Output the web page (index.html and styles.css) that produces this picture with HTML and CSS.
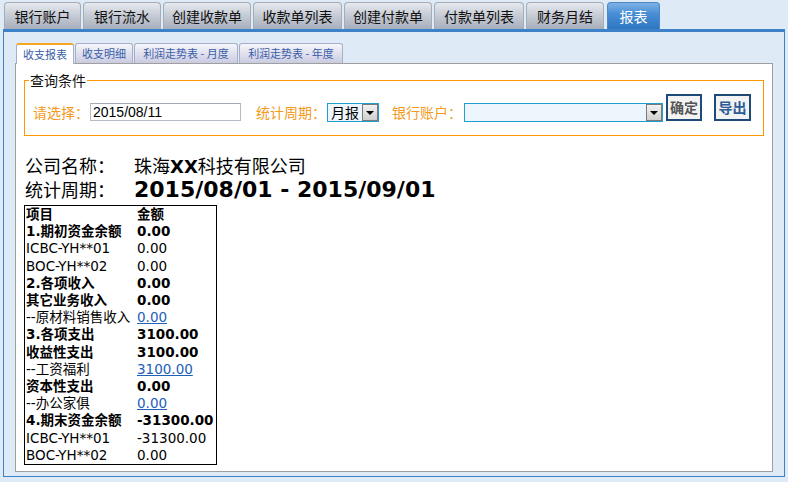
FILE: index.html
```html
<!DOCTYPE html>
<html>
<head>
<meta charset="utf-8">
<link rel="stylesheet" href="styles.css">
</head>
<body>
<div class="topnav">
  <div class="tab">银行账户</div>
  <div class="tab">银行流水</div>
  <div class="tab">创建收款单</div>
  <div class="tab">收款单列表</div>
  <div class="tab">创建付款单</div>
  <div class="tab">付款单列表</div>
  <div class="tab">财务月结</div>
  <div class="tab active">报表</div>
</div>
<div class="panel">
  <div class="subtabs">
    <div class="subtab active">收支报表</div>
    <div class="subtab">收支明细</div>
    <div class="subtab">利润走势表 - 月度</div>
    <div class="subtab">利润走势表 - 年度</div>
  </div>
  <div class="content">
    <fieldset class="query">
      <legend>查询条件</legend>
      <div class="qrow">
        <span class="lbl">请选择：</span>
        <span class="textin">2015/08/11</span>
        <span class="lbl l2">统计周期：</span>
        <span class="sel sel-period"><span class="selval">月报</span><span class="arrow"><span class="tri"></span></span></span>
        <span class="lbl l3">银行账户：</span>
        <span class="sel sel-bank"><span class="selval"></span><span class="arrow"><span class="tri"></span></span></span>
        <span class="btn btn-ok">确定</span>
        <span class="btn btn-exp">导出</span>
      </div>
    </fieldset>
    <div class="heading">
      <div class="hline"><span class="hlabel">公司名称：</span><span>珠海<b>XX</b>科技有限公司</span></div>
      <div class="hline"><span class="hlabel">统计周期：</span><b class="period">2015/08/01 - 2015/09/01</b></div>
    </div>
    <table class="report">
      <tr><td class="b">项目</td><td class="b">金额</td></tr>
      <tr><td class="b">1.期初资金余额</td><td class="b">0.00</td></tr>
      <tr><td>ICBC-YH**01</td><td>0.00</td></tr>
      <tr><td>BOC-YH**02</td><td>0.00</td></tr>
      <tr><td class="b">2.各项收入</td><td class="b">0.00</td></tr>
      <tr><td class="b">其它业务收入</td><td class="b">0.00</td></tr>
      <tr><td>--原材料销售收入</td><td><a href="#">0.00</a></td></tr>
      <tr><td class="b">3.各项支出</td><td class="b">3100.00</td></tr>
      <tr><td class="b">收益性支出</td><td class="b">3100.00</td></tr>
      <tr><td>--工资福利</td><td><a href="#">3100.00</a></td></tr>
      <tr><td class="b">资本性支出</td><td class="b">0.00</td></tr>
      <tr><td>--办公家俱</td><td><a href="#">0.00</a></td></tr>
      <tr><td class="b">4.期末资金余额</td><td class="b">-31300.00</td></tr>
      <tr><td>ICBC-YH**01</td><td>-31300.00</td></tr>
      <tr><td>BOC-YH**02</td><td>0.00</td></tr>
    </table>
  </div>
</div>
</body>
</html>
```

FILE: styles.css
```css
html, body {
  margin: 0;
  padding: 0;
  background: #dfeaf7;
  font-family: "DejaVu Sans", "Noto Sans CJK SC", sans-serif;
  font-size: 14px;
  color: #000;
}
.topnav {
  display: flex;
  gap: 2px;
  padding: 2px 0 0 4px;
  height: 27px;
}
.tab {
  box-sizing: border-box;
  height: 27px;
  padding: 0;
  text-align: center;
  line-height: 27px;
  font-family: "Noto Sans CJK SC", sans-serif;
  font-size: 14px;
  color: #111;
  border: 1px solid #a4acb8;
  border-bottom: none;
  border-radius: 4px 4px 0 0;
  background: linear-gradient(#e6e9ee 0%, #c8cdd6 45%, #a7afbb 100%);
}
.tab:nth-child(1) { width: 77px; }
.tab:nth-child(2) { width: 78px; }
.tab:nth-child(3) { width: 88px; }
.tab:nth-child(4) { width: 89px; }
.tab:nth-child(5) { width: 88px; }
.tab:nth-child(6) { width: 90px; }
.tab:nth-child(7) { width: 78px; }
.tab.active {
  width: 53px;
  margin-left: 1px;
  color: #fff;
  border-color: #4a88c8;
  background: linear-gradient(#7fb2e6 0%, #4a8fd6 40%, #2e76c2 100%);
}
.panel {
  margin: 0 3px;
  height: 448px;
  box-sizing: border-box;
  border: 1px solid #3d82c8;
  border-top: 3px solid #3d82c8;
  padding: 11px 11px 4px 11px;
  display: flex;
  flex-direction: column;
}
.subtabs {
  display: flex;
  gap: 1px;
  padding-left: 1px;
  height: 20px;
}
.subtab {
  box-sizing: border-box;
  height: 20px;
  padding: 0;
  text-align: center;
  line-height: 19px;
  font-family: "Noto Sans CJK SC", sans-serif;
  font-size: 11px;
  color: #3a5ea8;
  border: 1px solid #a9afc8;
  border-bottom: none;
  border-radius: 3px 3px 0 0;
  background: linear-gradient(#f6f6fb 0%, #dcdcec 60%, #c9cbe0 100%);
  white-space: pre;
}
.subtab.active {
  background: #fff;
  border-top: 2px solid #f5a623;
  height: 21px;
  margin-bottom: -1px;
  position: relative;
  z-index: 1;
  line-height: 18px;
  width: 58px;
}
.subtab:nth-child(2) { width: 58px; }
.subtab:nth-child(3) { width: 104px; }
.subtab:nth-child(4) { width: 104px; }
.content {
  flex: 1;
  background: #fff;
  border: 1px solid #a0a0a0;
  padding: 0 8px;
}
.query {
  margin: 8px 0 0 0;
  border: 1px solid #ff9900;
  padding: 6px 0 14px 8px;
}
.query legend {
  padding: 0 1px;
  margin-left: -4px;
  font-family: "Noto Sans CJK SC", sans-serif;
  font-size: 14px;
  line-height: 16px;
  color: #111;
}
.qrow {
  display: flex;
  align-items: flex-start;
  height: 27px;
}
.lbl {
  font-family: "Noto Sans CJK SC", sans-serif;
  font-size: 14px;
  color: #f39a1c;
  margin-top: 9px;
  line-height: 18px;
}
.l2 { margin-left: 15px; }
.l3 { margin-left: 13px; }
.textin {
  box-sizing: border-box;
  margin-left: 1px;
  margin-top: 9px;
  width: 151px;
  height: 18px;
  border: 1px solid #b5bcc6;
  border-top-color: #a4abb5;
  font-family: "Liberation Sans", sans-serif;
  font-size: 14px;
  line-height: 16px;
  padding-left: 2px;
  color: #000;
}
.sel {
  box-sizing: border-box;
  margin-top: 9px;
  height: 19px;
  border: 1px solid #1f9fcd;
  background: #eef6fd;
  display: flex;
  justify-content: space-between;
}
.sel-period { width: 52px; margin-left: 1px; }
.sel-bank { width: 199px; margin-left: 2px; }
.selval {
  font-family: "Noto Sans CJK SC", sans-serif;
  font-size: 14px;
  line-height: 17px;
  padding-left: 3px;
  color: #000;
}
.arrow {
  box-sizing: border-box;
  width: 16px;
  height: 17px;
  border: 1px solid #7a7a7a;
  background: linear-gradient(#f2f2f2, #cfcfcf);
  display: flex;
  align-items: center;
  justify-content: center;
}
.tri {
  width: 0; height: 0;
  border-left: 4px solid transparent;
  border-right: 4px solid transparent;
  border-top: 4px solid #000;
}
.btn {
  box-sizing: border-box;
  height: 27px;
  padding: 0;
  border: 2px solid #1d4a78;
  background: #f3f3f3;
  font-family: "Noto Sans CJK SC", sans-serif;
  font-weight: bold;
  font-size: 14px;
  line-height: 22px;
  text-align: center;
  white-space: nowrap;
}
.btn-ok { width: 36px; margin-left: 3px; color: #555; }
.btn-exp { width: 37px; margin-left: 12px; color: #2c5c96; }
.heading {
  margin-top: 18px;
  margin-left: 1px;
  font-family: "Noto Sans CJK SC", sans-serif;
  font-size: 18px;
  line-height: 22px;
}
.hline { display: flex; align-items: baseline; }
.hlabel { width: 109px; flex: none; }
.heading b {
  font-family: "DejaVu Sans", sans-serif;
  font-weight: bold;
}
.period {
  font-size: 22px;
}
.report {
  margin-top: 4px;
  border: 1px solid #000;
  border-collapse: collapse;
  width: 193px;
}
.report td {
  padding: 0 0 0 1px;
  height: 17.2px;
  line-height: 17px;
  font-family: "DejaVu Sans", "Noto Sans CJK SC", sans-serif;
  font-size: 13.5px;
  white-space: nowrap;
  vertical-align: middle;
}
.report td:first-child { width: 110px; }
.report td.b { font-weight: bold; }
.report a { color: #2160b8; text-decoration: underline; }
```
